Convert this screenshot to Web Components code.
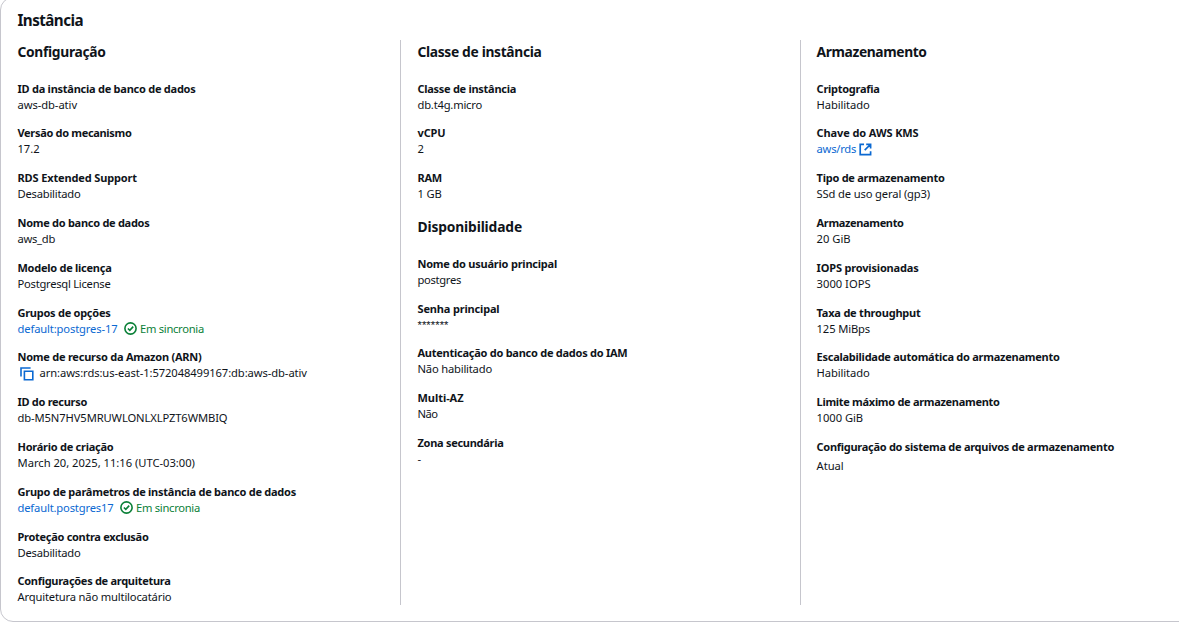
<!DOCTYPE html>
<html lang="pt-BR">
<head>
<meta charset="utf-8">
<title>Instância</title>
<style>
html,body{margin:0;height:100%;overflow:hidden;background:#fff}
body{font:11.2px/16px "Noto Sans","Open Sans",sans-serif;color:#0f141a}
.mask{font-family:"Liberation Sans",sans-serif}
</style>
</head>
<body>
<db-card>
  <fit-text slot="title" w="65.5">Instância</fit-text>
  <db-column>
    <db-section><fit-text slot="heading" w="88">Configuração</fit-text>
      <db-field label="ID da instância de banco de dados" lw="178"><fit-text w="59.5">aws-db-ativ</fit-text></db-field>
      <db-field label="Versão do mecanismo" lw="114"><fit-text w="22">17.2</fit-text></db-field>
      <db-field label="RDS Extended Support" lw="119.5"><fit-text w="63">Desabilitado</fit-text></db-field>
      <db-field label="Nome do banco de dados" lw="132"><fit-text w="37.5">aws_db</fit-text></db-field>
      <db-field label="Modelo de licença" lw="94"><fit-text w="93">Postgresql License</fit-text></db-field>
      <db-field label="Grupos de opções" lw="93"><db-link><fit-text w="100">default:postgres-17</fit-text></db-link><db-status><fit-text w="64">Em sincronia</fit-text></db-status></db-field>
      <db-field label="Nome de recurso da Amazon (ARN)" lw="184"><db-copy></db-copy><fit-text w="267.5">arn:aws:rds:us-east-1:572048499167:db:aws-db-ativ</fit-text></db-field>
      <db-field label="ID do recurso" lw="69.5"><fit-text w="210">db-M5N7HV5MRUWLONLXLPZT6WMBIQ</fit-text></db-field>
      <db-field label="Horário de criação" lw="96"><fit-text w="177.5">March 20, 2025, 11:16 (UTC-03:00)</fit-text></db-field>
      <db-field label="Grupo de parâmetros de instância de banco de dados" lw="278.5"><db-link><fit-text w="96">default.postgres17</fit-text></db-link><db-status><fit-text w="64">Em sincronia</fit-text></db-status></db-field>
      <db-field label="Proteção contra exclusão" lw="131"><fit-text w="63">Desabilitado</fit-text></db-field>
      <db-field label="Configurações de arquitetura" lw="153"><fit-text w="154">Arquitetura não multilocatário</fit-text></db-field>
    </db-section>
  </db-column>
  <db-column divided>
    <db-section><fit-text slot="heading" w="124">Classe de instância</fit-text>
      <db-field label="Classe de instância" lw="98.5"><fit-text w="64.5">db.t4g.micro</fit-text></db-field>
      <db-field label="vCPU" lw="28"><fit-text>2</fit-text></db-field>
      <db-field label="RAM" lw="24.5"><fit-text w="24">1 GB</fit-text></db-field>
    </db-section>
    <db-section><fit-text slot="heading" w="104.5">Disponibilidade</fit-text>
      <db-field label="Nome do usuário principal" lw="139.5"><fit-text w="43.5">postgres</fit-text></db-field>
      <db-field label="Senha principal" lw="82"><fit-text class="mask" w="31">*******</fit-text></db-field>
      <db-field label="Autenticação do banco de dados do IAM" lw="210"><fit-text w="74.5">Não habilitado</fit-text></db-field>
      <db-field label="Multi-AZ" lw="46"><fit-text w="20">Não</fit-text></db-field>
      <db-field label="Zona secundária" lw="86"><fit-text>-</fit-text></db-field>
    </db-section>
  </db-column>
  <db-column divided>
    <db-section><fit-text slot="heading" w="110">Armazenamento</fit-text>
      <db-field label="Criptografia" lw="63"><fit-text w="53">Habilitado</fit-text></db-field>
      <db-field label="Chave do AWS KMS" lw="102"><db-link external><fit-text w="39.5">aws/rds</fit-text></db-link></db-field>
      <db-field label="Tipo de armazenamento" lw="128"><fit-text w="113.5">SSd de uso geral (gp3)</fit-text></db-field>
      <db-field label="Armazenamento" lw="87"><fit-text w="34">20 GiB</fit-text></db-field>
      <db-field label="IOPS provisionadas" lw="102"><fit-text w="54">3000 IOPS</fit-text></db-field>
      <db-field label="Taxa de throughput" lw="104"><fit-text w="53.5">125 MiBps</fit-text></db-field>
      <db-field label="Escalabilidade automática do armazenamento" lw="243"><fit-text w="53">Habilitado</fit-text></db-field>
      <db-field label="Limite máximo de armazenamento" lw="183"><fit-text w="46.5">1000 GiB</fit-text></db-field>
      <db-field spaced label="Configuração do sistema de arquivos de armazenamento" lw="297.5"><fit-text w="27">Atual</fit-text></db-field>
    </db-section>
  </db-column>
</db-card>
<script>
const define = (name, html, setup) => customElements.define(name, class extends HTMLElement {
  constructor() {
    super();
    this.attachShadow({mode: 'open'}).innerHTML = html;
  }
  connectedCallback() { if (setup) setup(this, this.shadowRoot); }
});

define('db-card', `<style>
:host{display:block;box-sizing:border-box;width:1210px;height:625px;margin-top:-3px;border:1px solid #c6c6cd;border-radius:13px;padding:10px 0 0 16.5px}
header{font-size:15.2px;font-weight:700;line-height:24px;height:32px}
.columns{display:grid;grid-template-columns:382.5px 400px 400px;height:565px}
</style><header><slot name="title"></slot></header><div class="columns"><slot></slot></div>`);

define('db-column', `<style>
:host{display:flex;flex-direction:column;gap:13px;box-sizing:border-box;min-width:0}
:host([divided]){border-left:1px solid #c6c6cd;padding-left:16.5px}
:host([divided]:last-of-type){padding-left:15.6px}
</style><slot></slot>`);

define('db-section', `<style>
:host{display:block}
.head{font-size:13.8px;font-weight:700;line-height:24px;margin-bottom:16.6px}
.fields{display:flex;flex-direction:column;gap:12.8px}
</style><div class="head"><slot name="heading"></slot></div><div class="fields"><slot></slot></div>`);

define('db-field', `<style>
:host{display:block;height:32px}
.label{font-size:11px;font-weight:700;height:16px}
.value{display:flex;height:16px}
:host([spaced]) .value{margin-top:3px}
</style><div class="label"><fit-text></fit-text></div><div class="value"><slot></slot></div>`, (el, root) => {
  const t = root.querySelector('fit-text');
  t.textContent = el.getAttribute('label');
  t.setAttribute('w', el.getAttribute('lw'));
});

define('db-link', `<style>
:host{display:flex;color:#0b69d2}
svg{display:none;width:13px;height:13px;margin:2px 0 0 3px}
:host([external]) svg{display:block}
</style><slot></slot><svg viewBox="0 0 13 13" fill="none" stroke="currentColor" stroke-width="1.7"><path d="M5 1.3H1.2v10.4h10.4V8.2M7.2 1.3h4.4v4.3M11.4 1.5 5.7 7.2"/></svg>`);

define('db-status', `<style>
:host{display:flex;color:#0b8038;margin-left:6.5px}
svg{width:13px;height:13px;margin:1px 3px 0 0}
</style><svg viewBox="0 0 13 13" fill="none" stroke="currentColor" stroke-width="1.6"><circle cx="6.5" cy="6.5" r="5.6"/><path d="m3.9 6.5 1.9 1.9 3.4-3.8"/></svg><slot></slot>`);

define('db-copy', `<style>
:host{display:block;color:#0b69d2;width:22px}
svg{display:block;width:14px;height:14px;margin:1.4px 0 0 2.2px}
</style><svg viewBox="0 0 14 14" fill="none" stroke="currentColor" stroke-width="1.6"><path d="M1 9.4V1h9.6M4.4 4.2h8.4v8.6H4.4z"/></svg>`);

// Inline label whose tracking is adjusted so the text spans the width given in "w".
define('fit-text', `<style>
:host{display:inline-block;white-space:pre}
span{display:inline-block}
</style><span><slot></slot></span>`);
function fit(el) {
  const w = parseFloat(el.getAttribute('w'));
  if (!w) return;
  const s = el.shadowRoot.querySelector('span');
  s.style.letterSpacing = '0.001px';
  const n = el.textContent.length;
  const gap = (w - s.getBoundingClientRect().width) / n;
  s.style.letterSpacing = gap.toFixed(3) + 'px';
}
function fitAll(root) {
  root.querySelectorAll('*').forEach(e => {
    if (e.localName === 'fit-text') fit(e);
    else if (e.shadowRoot) fitAll(e.shadowRoot);
  });
}
fitAll(document);
</script>
</body>
</html>
